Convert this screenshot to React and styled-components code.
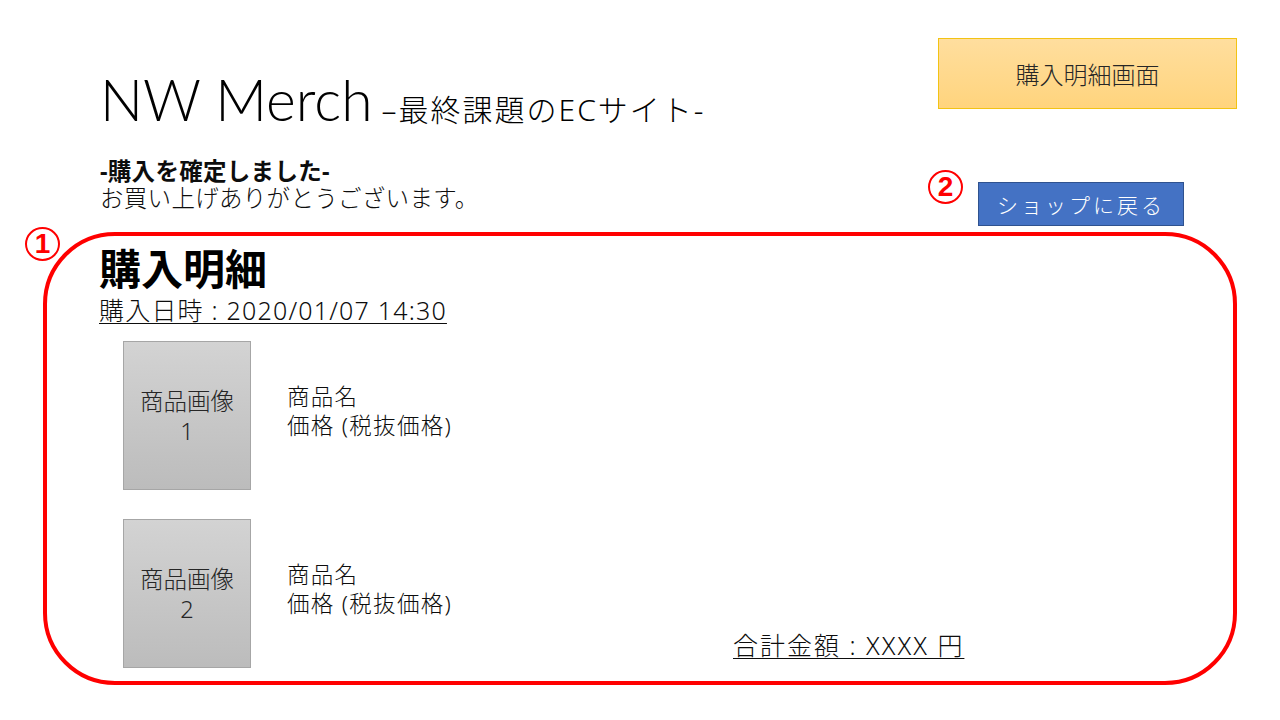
import React from 'react'
import styled, { createGlobalStyle } from 'styled-components'

const GlobalStyle = createGlobalStyle`
  body {
    margin: 0;
    background: #fff;
    font-family: "Noto Sans", "Noto Sans CJK JP", sans-serif;
    color: #0d0d0d;
  }
`

const Page = styled.div`
  width: 1280px;
  height: 720px;
  box-sizing: border-box;
  padding: 38px 43px 0 43px;
  display: flex;
  flex-direction: column;
  overflow: hidden;
  background: #fff;
`

const Header = styled.header`
  display: flex;
  justify-content: space-between;
  height: 194px;
`

const Intro = styled.div`
  padding: 28px 0 0 57px;
  display: flex;
  flex-direction: column;
`

const TitleRow = styled.div`
  display: flex;
  align-items: baseline;
  gap: 9px;
`

const SiteName = styled.h1`
  margin: 0;
  font-family: Lato, "Liberation Sans", sans-serif;
  font-weight: 300;
  font-size: 57px;
  line-height: 66px;
  color: #000;
`

const Tagline = styled.span`
  font-size: 30px;
  font-weight: 300;
  letter-spacing: 2px;
  color: #000;
`

const Notice = styled.div`
  margin-top: 26px;
  display: flex;
  flex-direction: column;
  font-size: 23.5px;
  line-height: 27px;
  letter-spacing: 0.3px;

  strong {
    font-weight: 700;
  }

  span {
    font-weight: 300;
  }
`

const Side = styled.div`
  display: flex;
  flex-direction: column;
  align-items: flex-end;
`

const ScreenLabel = styled.div`
  width: 299px;
  height: 71px;
  box-sizing: border-box;
  display: flex;
  align-items: center;
  justify-content: center;
  border: 1px solid #f2c314;
  background: linear-gradient(#ffde9e, #ffd47d);
  font-size: 24px;
  font-weight: 300;
  color: #262626;
`

const BackRow = styled.div`
  margin-top: 61px;
  margin-right: 53px;
  display: flex;
  align-items: flex-start;
  gap: 15px;
`

const CircleNum = styled.span`
  width: 35px;
  height: 34px;
  box-sizing: border-box;
  border: 2px solid #ff0000;
  border-radius: 50%;
  display: flex;
  align-items: center;
  justify-content: center;
  color: #ff0000;
  font-family: "Liberation Sans", sans-serif;
  font-weight: 700;
  font-size: 28px;
  line-height: 1;
  background: #fff;
`

const FrameBadge = styled(CircleNum)`
  position: absolute;
  left: -22px;
  top: -9px;
`

const BackButton = styled.button`
  margin-top: 12px;
  width: 206px;
  height: 44px;
  border: 1px solid #2f528f;
  background: #4472c4;
  color: #fff;
  font-family: inherit;
  font-size: 21px;
  font-weight: 300;
  letter-spacing: 3px;
  cursor: pointer;
`

const Frame = styled.section`
  position: relative;
  height: 453px;
  box-sizing: border-box;
  border: 4px solid #ff0000;
  border-radius: 72px;
  padding: 7px 20px 0 52px;
`

const Heading = styled.h2`
  margin: 0;
  font-size: 42px;
  line-height: 52px;
  font-weight: 700;
  color: #000;
`

const Underlined = styled.div`
  font-size: 25px;
  line-height: 30px;
  font-weight: 300;
  letter-spacing: ${props => props.$spacing || 1.2}px;
  text-decoration: underline;
  text-underline-offset: 3px;
  text-decoration-thickness: 1px;
`

const DateLine = styled(Underlined)`
  display: inline-block;
`

const Body = styled.div`
  margin-top: 16px;
  display: grid;
  grid-template-columns: 610px auto;
  padding-left: 24px;
`

const ItemList = styled.div`
  display: flex;
  flex-direction: column;
  gap: 29px;
`

const ItemRow = styled.div`
  display: flex;
  align-items: center;
  gap: 36px;
`

const Thumb = styled.div`
  width: 128px;
  height: 149px;
  box-sizing: border-box;
  border: 1px solid #a6a6a6;
  background: linear-gradient(#d3d3d3, #bcbcbc);
  display: flex;
  align-items: center;
  justify-content: center;
  text-align: center;
  font-size: 23.5px;
  line-height: 30px;
  font-weight: 300;
  color: #262626;
`

const ItemText = styled.div`
  display: flex;
  flex-direction: column;
  font-size: 22.5px;
  line-height: 29px;
  font-weight: 300;
  letter-spacing: 1.3px;
  margin-top: -10px;
`

const Total = styled(Underlined)`
  align-self: end;
  justify-self: start;
  margin-bottom: 8px;
`

const items = [
  { id: 1, name: '商品名', price: '価格 (税抜価格)' },
  { id: 2, name: '商品名', price: '価格 (税抜価格)' },
]

const App = () => {
  return (
    <>
      <GlobalStyle />
      <Page>
        <Header>
          <Intro>
            <TitleRow>
              <SiteName>NW Merch</SiteName>
              <Tagline>–最終課題のECサイト-</Tagline>
            </TitleRow>
            <Notice>
              <strong>-購入を確定しました-</strong>
              <span>お買い上げありがとうございます。</span>
            </Notice>
          </Intro>
          <Side>
            <ScreenLabel>購入明細画面</ScreenLabel>
            <BackRow>
              <CircleNum>2</CircleNum>
              <BackButton>ショップに戻る</BackButton>
            </BackRow>
          </Side>
        </Header>

        <Frame>
          <FrameBadge>1</FrameBadge>
          <Heading>購入明細</Heading>
          <DateLine>購入日時 : 2020/01/07 14:30</DateLine>
          <Body>
            <ItemList>
              {items.map(item => (
                <ItemRow key={item.id}>
                  <Thumb>
                    商品画像
                    <br />
                    {item.id}
                  </Thumb>
                  <ItemText>
                    <span>{item.name}</span>
                    <span>{item.price}</span>
                  </ItemText>
                </ItemRow>
              ))}
            </ItemList>
            <Total $spacing={2}>合計金額 : XXXX 円</Total>
          </Body>
        </Frame>
      </Page>
    </>
  )
}

export default App
